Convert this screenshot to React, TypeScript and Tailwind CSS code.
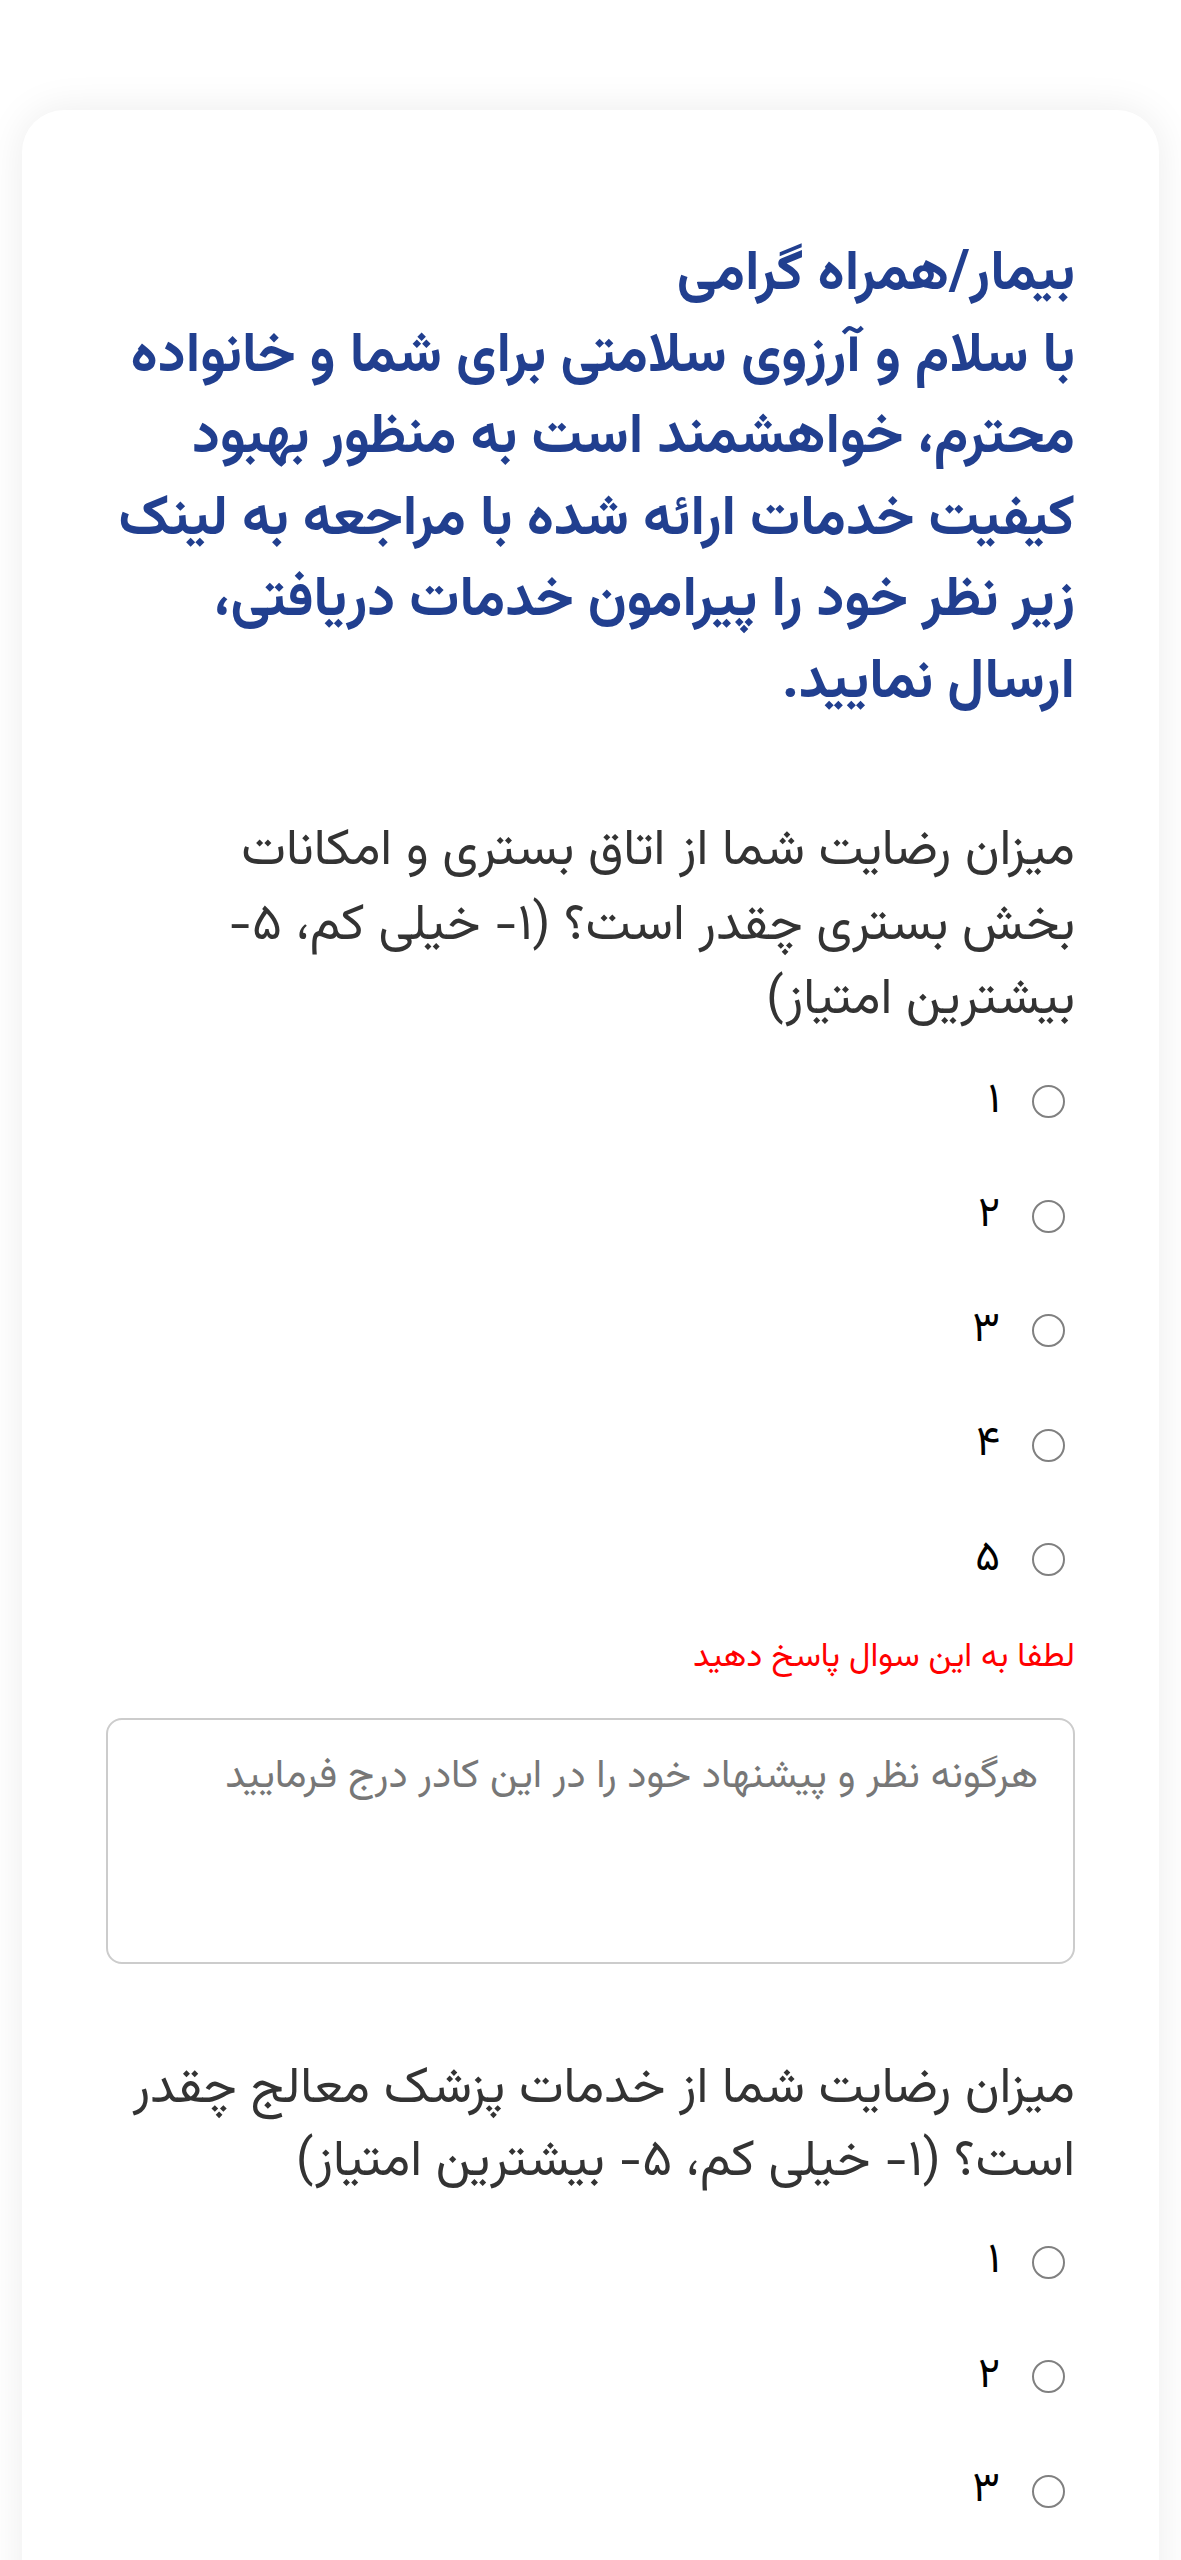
import { useState } from "react";

const FONT = { fontFamily: '"Vazirmatn", "Noto Sans Arabic", "DejaVu Sans", sans-serif' };

const toFa = (n: number) => "۰۱۲۳۴۵۶۷۸۹"[n];

// Lines as they break in the survey form.
const intro = [
  "بیمار/همراه گرامی",
  "با سلام و آرزوی سلامتی برای شما و خانواده",
  "محترم، خواهشمند است به منظور بهبود",
  "کیفیت خدمات ارائه شده با مراجعه به لینک",
  "زیر نظر خود را پیرامون خدمات دریافتی،",
  "ارسال نمایید.",
];

function Lines({ lines }: { lines: string[] }) {
  return (
    <>
      {lines.map((line) => (
        <span key={line} className="block whitespace-nowrap">
          {line}
        </span>
      ))}
    </>
  );
}

function RatingOptions({ name, count }: { name: string; count: number }) {
  const [value, setValue] = useState<number | null>(null);
  return (
    <div className="flex flex-col">
      {Array.from({ length: count }, (_, i) => i + 1).map((n) => (
        <label key={n} className="flex h-[114.5px] items-center gap-[32px] pr-[10px]">
          <input
            type="radio"
            name={name}
            checked={value === n}
            onChange={() => setValue(n)}
            className="h-[33px] w-[33px] shrink-0 appearance-none rounded-full border-[2.5px] border-[#808080] bg-white checked:border-[10px] checked:border-[#213f8f]"
          />
          <span className="text-[42px] leading-none text-black">{toFa(n)}</span>
        </label>
      ))}
    </div>
  );
}

export default function App() {
  const [comment, setComment] = useState("");

  return (
    <div dir="rtl" style={FONT} className="min-h-[2560px] bg-white pt-[110px]">
      <section className="mx-[22px] rounded-[42px] bg-white px-[84px] pt-[125px] pb-[120px] shadow-[0_0_40px_rgba(0,0,0,0.08)]">
        <h1 className="text-[56px] font-bold leading-[81.5px] text-[#213f8f]">
          <Lines lines={intro} />
        </h1>

        <div className="mt-[91px]">
          <p className="text-[51px] leading-[74.5px] text-[#333]">
            <Lines
              lines={[
                "میزان رضایت شما از اتاق بستری و امکانات",
                "بخش بستری چقدر است؟ (۱- خیلی کم، ۵-",
                "بیشترین امتیاز)",
              ]}
            />
          </p>
          <div className="mt-[6px]">
            <RatingOptions name="q1" count={5} />
          </div>
          <p className="mt-[17px] text-[33.5px] leading-[48px] text-[#ff0000]">لطفا به این سوال پاسخ دهید</p>
        </div>

        <textarea
          value={comment}
          onChange={(e) => setComment(e.target.value)}
          placeholder="هرگونه نظر و پیشنهاد خود را در این کادر درج فرمایید"
          className="mt-[36px] block h-[246px] w-full resize-none rounded-[16px] border-2 border-[#cccccc] px-[35px] pt-[31px] pb-[20px] text-[40px] leading-[52px] text-[#333] outline-none placeholder:text-[#777]"
        />

        <div className="mt-[89px]">
          <p className="text-[51px] leading-[73px] text-[#333]">
            <Lines
              lines={[
                "میزان رضایت شما از خدمات پزشک معالج چقدر",
                "است؟ (۱- خیلی کم، ۵- بیشترین امتیاز)",
              ]}
            />
          </p>
          <div className="mt-[6px]">
            <RatingOptions name="q2" count={5} />
          </div>
        </div>
      </section>
    </div>
  );
}
